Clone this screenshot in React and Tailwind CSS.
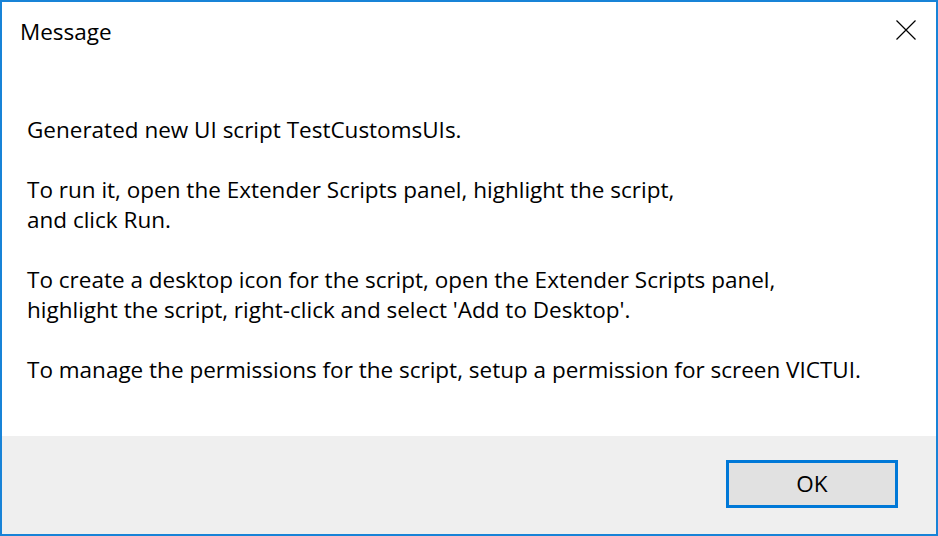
export default function App() {
  const font = { fontFamily: '"Open Sans", "Noto Sans", sans-serif' };
  return (
    <div className="w-[938px] h-[536px] border-2 border-[#1883d7] flex flex-col bg-white text-black" style={font}>
      <div className="flex items-start justify-between h-[62px]">
        <div className="pl-[18px] pt-[15px] text-[22.5px] leading-[30px]">Message</div>
        <div className="pr-[20px] pt-[18px]">
          <svg width="20" height="20" viewBox="0 0 20 20">
            <path d="M0.5 0.5L19.5 19.5M19.5 0.5L0.5 19.5" stroke="#000" strokeWidth="1.2" fill="none" />
          </svg>
        </div>
      </div>
      <div className="flex-1 pl-[25px] pt-[51px] text-[22.5px] leading-[30px]">
        <p>Generated new UI script TestCustomsUIs.</p>
        <p className="mt-[30px]">To run it, open the Extender Scripts panel, highlight the script,<br />and click Run.</p>
        <p className="mt-[30px]">To create a desktop icon for the script, open the Extender Scripts panel,<br />highlight the script, right-click and select 'Add to Desktop'.</p>
        <p className="mt-[30px]">To manage the permissions for the script, setup a permission for screen VICTUI.</p>
      </div>
      <div className="h-[98px] bg-[#efefef] flex items-start justify-end pr-[38px] pt-[24px]">
        <button className="w-[172px] h-[48px] border-[3px] border-[#0078d7] bg-[#e1e1e1] text-[22.5px] leading-none">OK</button>
      </div>
    </div>
  );
}
